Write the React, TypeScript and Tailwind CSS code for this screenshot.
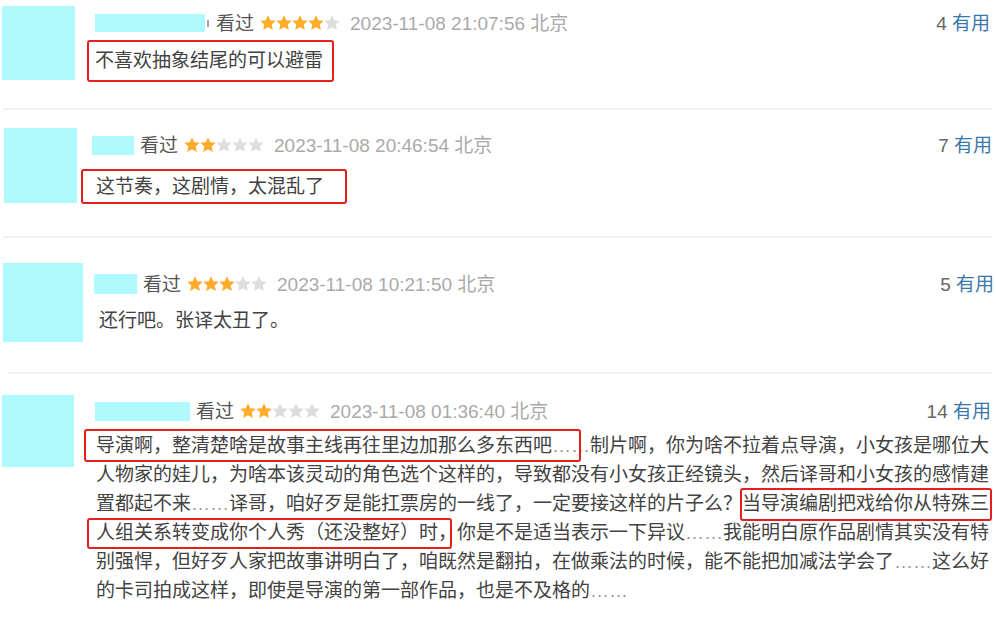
const FONT = "font-['Liberation_Sans','Noto_Sans_CJK_SC',sans-serif]";

function Stars({ n }: { n: number }) {
  return (
    <span className="flex">
      {[0, 1, 2, 3, 4].map((i) => (
        <svg key={i} width="16" height="16" viewBox="0 0 24 24">
          <path
            d="M12 0.5l3.5 7.4 8.1.9-6 5.5 1.7 8.1L12 18.2l-7.3 4.2 1.7-8.1-6-5.5 8.1-.9z"
            fill={i < n ? "#ffac2d" : "#dedede"}
          />
        </svg>
      ))}
    </span>
  );
}

type HeadProps = {
  nameW: string;
  nameH: string;
  gapName: string;
  stars: number;
  date: string;
  votes: number;
  blip?: boolean;
};

// 用户名那一行：打码的名字 + 看过 + 星级 + 时间 + 有用
function Head({ nameW, nameH, gapName, stars, date, votes, blip }: HeadProps) {
  return (
    <div className="flex h-[20px] items-center text-[19px] leading-none">
      <span className={`${nameW} ${nameH} bg-[#adf9fb]`} />
      {blip && <span className="ml-[2px] h-[7px] w-[2px] bg-[#9aa]" />}
      <span className={`${gapName} text-[#555]`}>看过</span>
      <span className="ml-[6px]">
        <Stars n={stars} />
      </span>
      <span className="ml-[10px] text-[#aaa]">{date} 北京</span>
      <span className="ml-auto text-[#666]">
        {votes} <span className="text-[#3a77aa]">有用</span>
      </span>
    </div>
  );
}

function Mark({
  children,
  box,
}: {
  children: React.ReactNode;
  box: string;
}) {
  return (
    <span className="relative inline-block">
      {children}
      <span className={`absolute rounded-[3px] border-[2.5px] border-[#e3201c] ${box}`} />
    </span>
  );
}

export default function App() {
  return (
    <div className={`h-[623px] w-[996px] overflow-hidden bg-white text-[#424242] ${FONT}`}>
      {/* 1 */}
      <div className="flex h-[108px] items-start">
        <div className="ml-[2px] mt-[6px] h-[74px] w-[73px] shrink-0 bg-[#adf9fb]" />
        <div className="ml-[12px] mr-[6px] flex-1 pt-[13px]">
          <div className="ml-[8px]">
            <Head nameW="w-[110px]" nameH="h-[18px]" gapName="ml-[7px]" stars={4} date="2023-11-08 21:07:56" votes={4} blip />
          </div>
          <div className="mt-[7px] inline-block rounded-[3px] border-[2.5px] border-[#e3201c] pl-[6px] pr-[9px] text-[19px] leading-[38px]">
            不喜欢抽象结尾的可以避雷
          </div>
        </div>
      </div>
      <div className="ml-[3px] mr-[4px] h-[2px] bg-[#f1f1f1]" />

      {/* 2 */}
      <div className="flex h-[126px] items-start">
        <div className="ml-[4px] mt-[18px] h-[75px] w-[73px] shrink-0 bg-[#adf9fb]" />
        <div className="ml-[4px] mr-[4px] flex-1 pt-[25px]">
          <div className="ml-[11px]">
            <Head nameW="w-[42px]" nameH="h-[19px]" gapName="ml-[6px]" stars={2} date="2023-11-08 20:46:54" votes={7} />
          </div>
          <div className="mt-[14px] inline-block rounded-[3px] border-[2.5px] border-[#e3201c] pl-[13px] pr-[21px] text-[19px] leading-[31px]">
            这节奏，这剧情，太混乱了
          </div>
        </div>
      </div>
      <div className="ml-[3px] mr-[4px] h-[2px] bg-[#f1f1f1]" />

      {/* 3 */}
      <div className="flex h-[134px] items-start">
        <div className="ml-[3px] mt-[25px] h-[79px] w-[80px] shrink-0 bg-[#adf9fb]" />
        <div className="ml-[11px] mr-[2px] flex-1 pt-[36px]">
          <Head nameW="w-[43px]" nameH="h-[20px]" gapName="ml-[6px]" stars={3} date="2023-11-08 10:21:50" votes={5} />
          <div className="ml-[5px] mt-[12px] text-[19px] leading-[29px]">还行吧。张译太丑了。</div>
        </div>
      </div>
      <div className="ml-[8px] mr-[4px] h-[2px] bg-[#f1f1f1]" />

      {/* 4 */}
      <div className="flex items-start">
        <div className="ml-[2px] mt-[21px] h-[72px] w-[72px] shrink-0 bg-[#adf9fb]" />
        <div className="ml-[21px] mr-[5px] flex-1 pt-[27px]">
          <Head nameW="w-[95px]" nameH="h-[19px]" gapName="ml-[6px]" stars={2} date="2023-11-08 01:36:40" votes={14} />
          <div className="ml-[1px] mt-[10px] whitespace-nowrap text-[19px] leading-[29px]">
            <div>
              <Mark box="-left-[12px] -right-[29px] -top-[2px] -bottom-[2px]">
                导演啊，整清楚啥是故事主线再往里边加那么多东西吧
              </Mark>
              <span className="text-[#999]">……</span>制片啊，你为啥不拉着点导演，小女孩是哪位大
            </div>
            <div>人物家的娃儿，为啥本该灵动的角色选个这样的，导致都没有小女孩正经镜头，然后译哥和小女孩的感情建</div>
            <div>
              置都起不来<span className="text-[#999]">……</span>译哥，咱好歹是能扛票房的一线了，一定要接这样的片子么？
              <Mark box="-left-[2px] -right-[3px] -top-[1px] -bottom-[3px]">当导演编剧把戏给你从特殊三</Mark>
            </div>
            <div>
              <Mark box="-left-[9px] right-[5px] top-0 -bottom-[2px]">人组关系转变成你个人秀（还没整好）时，</Mark>
              你是不是适当表示一下异议<span className="text-[#999]">……</span>我能明白原作品剧情其实没有特
            </div>
            <div>
              别强悍，但好歹人家把故事讲明白了，咱既然是翻拍，在做乘法的时候，能不能把加减法学会了<span className="text-[#999]">……</span>这么好
            </div>
            <div>
              的卡司拍成这样，即使是导演的第一部作品，也是不及格的<span className="text-[#999]">……</span>
            </div>
          </div>
        </div>
      </div>
    </div>
  );
}
